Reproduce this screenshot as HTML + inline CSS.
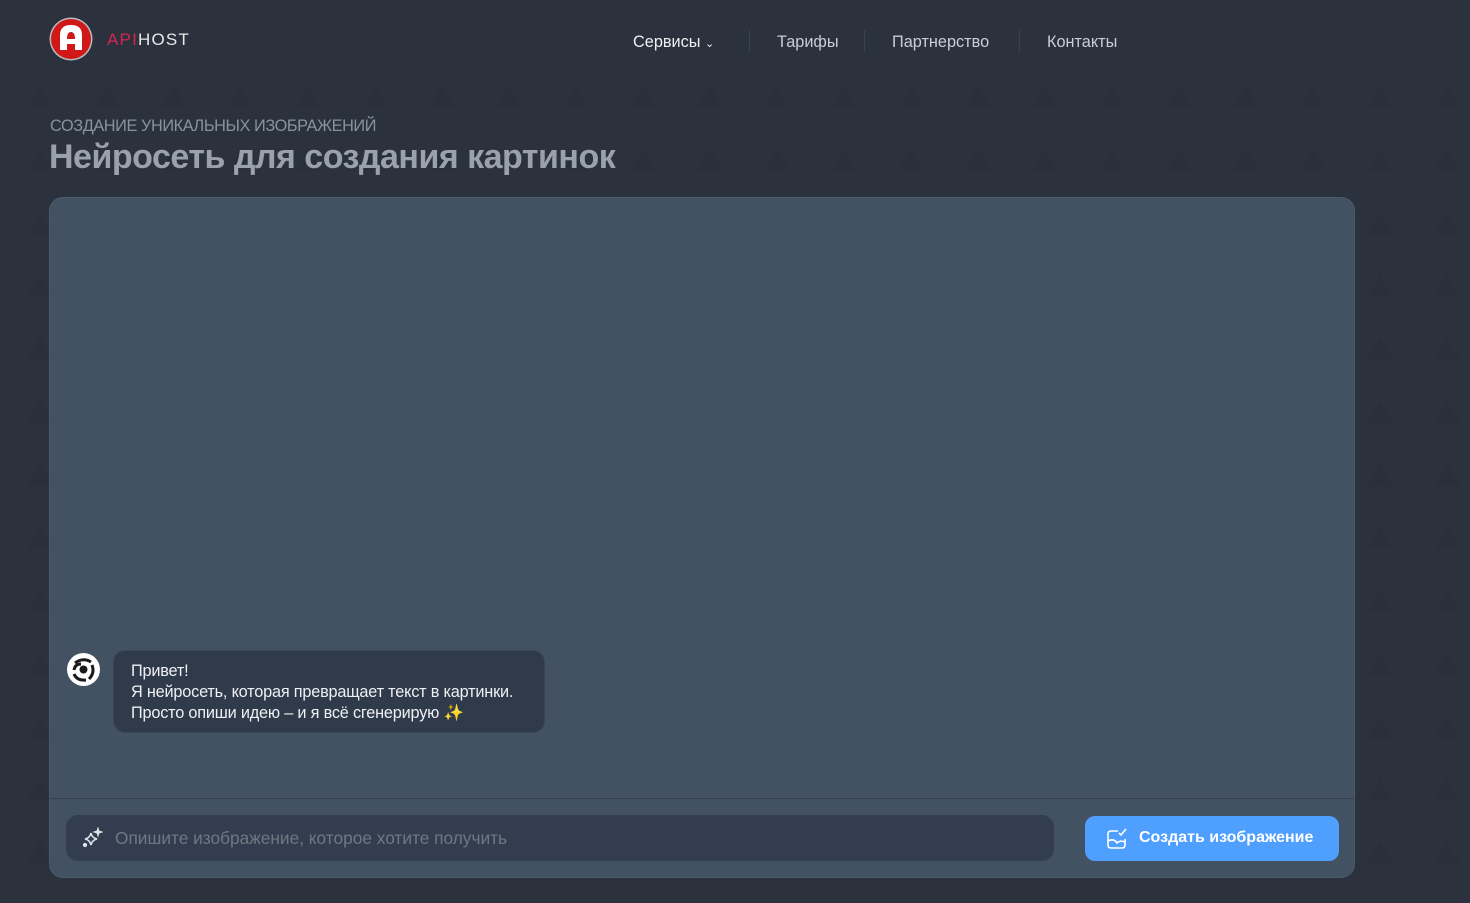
<!DOCTYPE html>
<html><head><meta charset="utf-8"><style>
*{margin:0;padding:0;box-sizing:border-box}
body{width:1470px;height:903px;overflow:hidden;background:#2b323d;font-family:"Liberation Sans","DejaVu Sans",sans-serif;position:relative}
.pat{position:absolute;left:0;top:0}
.logo{position:absolute;left:49px;top:17px}
.brand{position:absolute;left:107px;top:30px;font-size:17px;letter-spacing:1.2px;color:#e8e8e8}
.brand b{font-weight:normal;color:#d8244f}
.nav{position:absolute;top:33px;font-size:16.3px;color:#c9ced6}
.sep{position:absolute;top:30px;width:1px;height:22px;background:#3a424e}
.sub{position:absolute;left:50px;top:117px;font-size:16.3px;color:#8a929e;letter-spacing:-0.4px}
h1{position:absolute;left:49px;top:138px;font-size:34px;font-weight:bold;color:#9aa1ab;letter-spacing:-0.5px}
.card{position:absolute;left:49px;top:197px;width:1306px;height:681px;background:#435263;border-radius:14px;border:1px solid #4a596b}
.line{position:absolute;left:0;right:0;top:600px;height:1px;background:#34404f}
.av{position:absolute;left:17px;top:455px;width:33px;height:33px;border-radius:50%;background:#fff}
.bub{position:absolute;left:63px;top:452px;width:432px;height:83px;background:#2f3a4a;border-radius:12px;border:1px solid #3a4658;color:#eef0f3;font-size:16.3px;line-height:21px;padding:10px 17px;letter-spacing:-0.2px}
.inp{position:absolute;left:16px;top:617px;width:988px;height:46px;background:#323e4f;border-radius:12px;color:#6f7782;font-size:17.3px;padding:13px 0 0 49px}
.btn{position:absolute;left:1035px;top:618px;width:254px;height:45px;background:#4f9fff;border-radius:10px;color:#fff;font-weight:bold;font-size:16px;padding:13px 0 0 54px}
</style></head><body>
<svg class="pat" width="1470" height="903"><defs><pattern id="p" x="6" y="85" width="67" height="63" patternUnits="userSpaceOnUse"><path d="M34 0 L47 23 L21 23Z" fill="#29303a"/></pattern></defs><rect y="85" width="1470" height="818" fill="url(#p)"/></svg>
<svg class="logo" width="44" height="44" viewBox="0 0 44 44"><circle cx="22" cy="22" r="21.5" fill="#bbb"/><circle cx="22" cy="22" r="20" fill="#d01818"/><path d="M11 33 V18 Q11 8 22 8 Q33 8 33 18 V33 H26 V27 H18 V33Z" fill="#fff"/><path d="M18 22 Q18 15 22 15 Q26 15 26 22Z" fill="#d01818"/></svg>
<div class="brand"><b>API</b>HOST</div>
<div class="nav" style="left:633px;color:#eef0f3">Сервисы <span style="font-size:11px">&#8964;</span></div>
<div class="sep" style="left:749px"></div>
<div class="nav" style="left:777px">Тарифы</div>
<div class="sep" style="left:864px"></div>
<div class="nav" style="left:892px">Партнерство</div>
<div class="sep" style="left:1019px"></div>
<div class="nav" style="left:1047px">Контакты</div>
<div class="sub">СОЗДАНИЕ УНИКАЛЬНЫХ ИЗОБРАЖЕНИЙ</div>
<h1>Нейросеть для создания картинок</h1>
<div class="card">
<div class="av"><svg width="33" height="33" viewBox="0 0 33 33"><g fill="none" stroke="#1a1a1a" stroke-width="3"><path d="M8 10 Q16 4 24 9"/><path d="M25 12 Q28 20 22 26"/><path d="M19 27 Q10 28 7 21"/><path d="M7 17 Q8 11 14 11"/></g><circle cx="16.5" cy="16.5" r="4" fill="#1a1a1a"/></svg></div>
<div class="bub">Привет!<br>Я нейросеть, которая превращает текст в картинки.<br>Просто опиши идею – и я всё сгенерирую <span style="color:#ffe033">✨</span></div>
<div class="line"></div>
<div class="inp"><svg style="position:absolute;left:15px;top:12px" width="22" height="22" viewBox="0 0 22 22" fill="none" stroke="#dfe3e8" stroke-width="1.6"><path d="M10 6 Q11 11 16 12 Q11 13 10 18 Q9 13 4 12 Q9 11 10 6Z"/><path d="M17 2 L17.7 4.3 L20 5 L17.7 5.7 L17 8 L16.3 5.7 L14 5 L16.3 4.3Z"/><circle cx="4" cy="18" r="1.3" fill="#dfe3e8"/></svg>Опишите изображение, которое хотите получить</div>
<div class="btn"><svg style="position:absolute;left:20px;top:11px" width="24" height="24" viewBox="0 0 24 24" fill="none" stroke="#fff" stroke-width="1.6"><path d="M13 4 H6 Q3 4 3 7 V18 Q3 21 6 21 H17 Q20 21 20 18 V12"/><path d="M3 14 Q9 11 12 16 Q15 13 20 15"/><path d="M14 6 L16 8 L21 2"/></svg>Создать изображение</div>
</div>
</body></html>
